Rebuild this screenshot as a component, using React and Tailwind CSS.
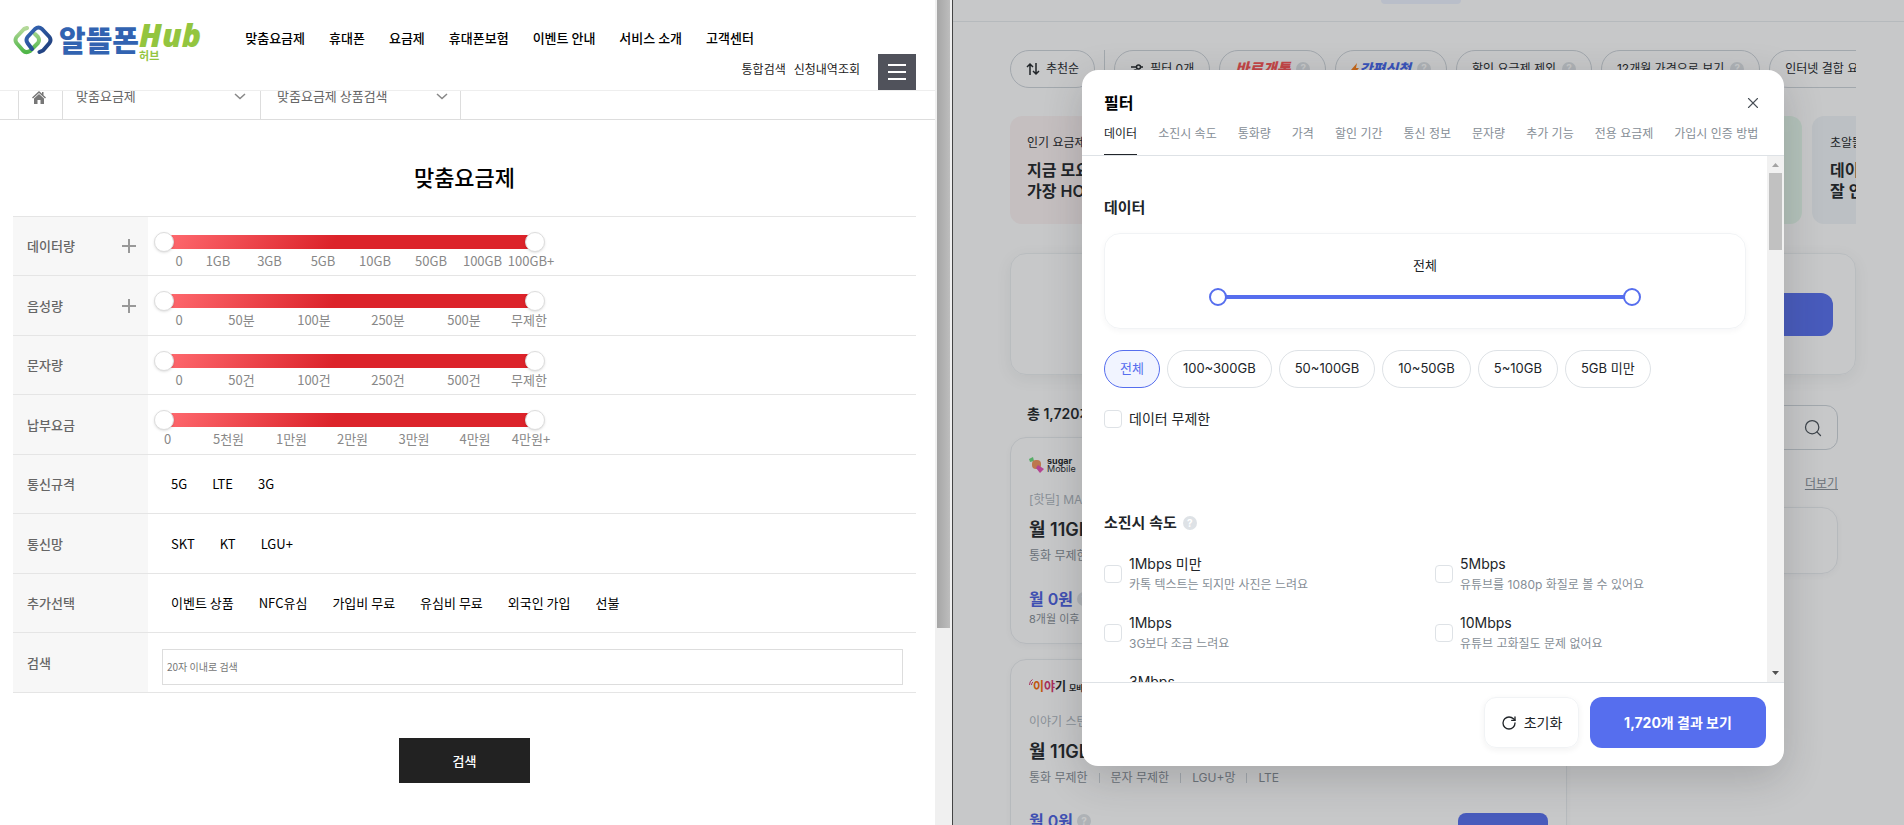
import React, { useState } from 'react';
import { Search, RotateCw, X } from 'lucide-react';

const menus = ['맞춤요금제', '휴대폰', '요금제', '휴대폰보험', '이벤트 안내', '서비스 소개', '고객센터'];

const countTicks = 'grid-cols-[36px_89px_56px_92px_60px_70px] pl-[13px]';

const sliders = [
  {
    id: 'data',
    label: '데이터량',
    expandable: true,
    ticks: ['0', '1GB', '3GB', '5GB', '10GB', '50GB', '100GB', '100GB+'],
    cols: 'grid-cols-[36px_42px_61px_46px_58px_54px_49px_48px] pl-[13px]'
  },
  {
    id: 'voice',
    label: '음성량',
    expandable: true,
    ticks: ['0', '50분', '100분', '250분', '500분', '무제한'],
    cols: countTicks
  },
  {
    id: 'sms',
    label: '문자량',
    ticks: ['0', '50건', '100건', '250건', '500건', '무제한'],
    cols: countTicks
  },
  {
    id: 'fee',
    label: '납부요금',
    ticks: ['0', '5천원', '1만원', '2만원', '3만원', '4만원', '4만원+'],
    cols: 'grid-cols-[39px_83px_43px_79px_44px_78px_34px]'
  }
];

const optionRows = [
  { label: '통신규격', options: ['5G', 'LTE', '3G'] },
  { label: '통신망', options: ['SKT', 'KT', 'LGU+'] },
  { label: '추가선택', options: ['이벤트 상품', 'NFC유심', '가입비 무료', '유심비 무료', '외국인 가입', '선불'] }
];

const filterTabs = ['데이터', '소진시 속도', '통화량', '가격', '할인 기간', '통신 정보', '문자량', '추가 기능', '전용 요금제', '가입시 인증 방법'];

const dataRanges = ['전체', '100~300GB', '50~100GB', '10~50GB', '5~10GB', '5GB 미만'];

const speeds = [
  { name: '1Mbps 미만', desc: '카톡 텍스트는 되지만 사진은 느려요' },
  { name: '5Mbps', desc: '유튜브를 1080p 화질로 볼 수 있어요' },
  { name: '1Mbps', desc: '3G보다 조금 느려요' },
  { name: '10Mbps', desc: '유튜브 고화질도 문제 없어요' }
];

const rowClass = 'border-b border-[#e5e5e5] odd:h-[59px] even:h-[60px]';
const thClass = 'w-[135px] bg-[#f7f7f7] pl-3.5 pr-3 text-left font-medium text-[#666]';

// 두 개의 range input을 겹친 양방향 슬라이더
const DualRange = ({ label, inputClass, children }) => {
  const [min, setMin] = useState(0);
  const [max, setMax] = useState(100);

  return (
    <>
      {children}
      <input
        type="range"
        aria-label={`${label} 최소`}
        value={min}
        onChange={(e) => setMin(Math.min(Number(e.target.value), max))}
        className={inputClass}
      />
      <input
        type="range"
        aria-label={`${label} 최대`}
        value={max}
        onChange={(e) => setMax(Math.max(Number(e.target.value), min))}
        className={inputClass}
      />
    </>
  );
};

const redThumbs =
  'pointer-events-none absolute inset-0 w-full appearance-none bg-transparent [&::-webkit-slider-thumb]:pointer-events-auto [&::-webkit-slider-thumb]:size-5 [&::-webkit-slider-thumb]:appearance-none [&::-webkit-slider-thumb]:rounded-full [&::-webkit-slider-thumb]:border [&::-webkit-slider-thumb]:border-[#ddd] [&::-webkit-slider-thumb]:bg-white [&::-webkit-slider-thumb]:shadow-sm';

const blueThumbs =
  'pointer-events-none absolute inset-0 w-full appearance-none bg-transparent [&::-webkit-slider-thumb]:pointer-events-auto [&::-webkit-slider-thumb]:size-[18px] [&::-webkit-slider-thumb]:appearance-none [&::-webkit-slider-thumb]:rounded-full [&::-webkit-slider-thumb]:border-2 [&::-webkit-slider-thumb]:border-[#566eee] [&::-webkit-slider-thumb]:bg-white';

const HubLogo = () => (
  <a href="#" className="flex items-start" aria-label="알뜰폰 허브">
    <svg viewBox="0 0 40 30" className="mt-1 h-[30px] w-10" fill="none" strokeWidth="4" strokeLinecap="round" strokeLinejoin="round">
      <defs>
        <linearGradient id="hubGreen" x1="0" y1="0" x2="0" y2="1">
          <stop offset="0" stopColor="#b5d99a" />
          <stop offset="1" stopColor="#4fb648" />
        </linearGradient>
        <linearGradient id="hubBlue" x1="0" y1="0" x2="1" y2="1">
          <stop offset="0" stopColor="#3568b8" />
          <stop offset="1" stopColor="#1f3c78" />
        </linearGradient>
      </defs>
      <path d="M14 3 11 4 3.500 12Q1.500 15 3.500 18L10 25.500Q13 28.500 17 26L25 18Q27 15 25 12L22 9" stroke="url(#hubGreen)" />
      <path d="M19 24 14.500 18Q12.500 15 14.500 12L22 4Q25.500 1 29 4L36.500 12Q38.500 15 36.500 18L30 25.500 26.500 27" stroke="url(#hubBlue)" />
    </svg>
    <span className="ml-1.5 text-[29px] leading-9 font-black text-[#3263b1]">알뜰폰</span>
    <span className="flex flex-col text-[#93c53f]">
      <span className="font-['Open_Sans','Noto_Sans',sans-serif] text-[32px] leading-7 font-extrabold italic">Hub</span>
      <span className="text-[11px] leading-3 font-bold">허브</span>
    </span>
  </a>
);

const HomeIcon = () => (
  <svg viewBox="0 0 14 13" className="h-[13px] w-3.5" fill="#777">
    <path d="M7 0 0 6.500l1 1L7 2l6 5.500 1-1-2.500-2.300V1H10v1.800z" />
    <path d="M7 3 2 7.600V13h3.500V9h3v4H12V7.600z" />
  </svg>
);

const Caret = () => (
  <svg viewBox="0 0 12 7" className="h-[7px] w-3" fill="none" stroke="#888" strokeWidth="1.500">
    <path d="M1 1l5 4.500L11 1" />
  </svg>
);

const HelpIcon = () => (
  <span className="flex size-3.5 items-center justify-center rounded-full bg-[#dee2e6] text-[10px] font-bold text-white">?</span>
);

const SearchPane = () => (
  <div className="flex w-1/2 shrink-0 bg-white font-['Noto_Sans_CJK_KR',sans-serif] text-[13px] text-black">
    <div className="min-w-0 flex-1">
      <header className="relative z-10 flex h-[91px] justify-between border-b border-[#eee] bg-white pr-[19px] pl-[13px]">
        <div className="flex items-start pt-[21px]">
          <HubLogo />
          <nav className="ml-11 flex gap-6 pt-[7px] leading-5 font-medium whitespace-nowrap">
            {menus.map(menu => (
              <a key={menu} href="#">{menu}</a>
            ))}
          </nav>
        </div>
        <div className="-ml-10 flex items-end">
          <div className="mr-[18px] flex gap-2 pb-[11px] text-xs leading-5 whitespace-nowrap text-[#222]">
            <a href="#">통합검색</a>
            <a href="#">신청내역조회</a>
          </div>
          <button type="button" aria-label="전체 메뉴" className="flex h-9 w-[38px] flex-col items-center justify-center gap-[5px] bg-[#50525b]">
            <span className="h-0.5 w-[18px] bg-white"></span>
            <span className="h-0.5 w-[18px] bg-white"></span>
            <span className="h-0.5 w-[18px] bg-white"></span>
          </button>
        </div>
      </header>

      {/* 현재 위치 */}
      <div className="-mt-4 flex h-[45px] border-b border-[#ddd] pl-[18px] text-[#666]">
        <a href="#" aria-label="홈" className="flex w-[45px] items-center justify-center border-x border-[#ddd] pr-1">
          <HomeIcon />
        </a>
        <button type="button" className="flex w-[198px] items-center justify-between border-r border-[#ddd] pr-3.5 pl-[13px] pb-0.5">
          맞춤요금제 <Caret />
        </button>
        <button type="button" className="flex w-[200px] items-center justify-between border-r border-[#ddd] pr-3 pl-4 pb-0.5">
          맞춤요금제 상품검색 <Caret />
        </button>
      </div>

      <main className="pr-[19px] pl-[13px]">
        <h1 className="pt-[39px] pb-[23px] text-center text-[22px] leading-[34px] font-medium">맞춤요금제</h1>
        <table className="w-full border-t border-[#e5e5e5]">
          <tbody>
            {sliders.map(row => (
              <tr key={row.id} className={rowClass}>
                <th scope="row" className={thClass}>
                  <span className="flex items-center justify-between">
                    {row.label}
                    {row.expandable && (
                      <button type="button" aria-label={`${row.label} 펼치기`} className="text-[#999]">
                        <svg viewBox="0 0 14 14" className="size-3.5" fill="none" stroke="currentColor" strokeWidth="2">
                          <path d="M7 0v14M0 7h14" />
                        </svg>
                      </button>
                    )}
                  </span>
                </th>
                <td className="pt-[9px]">
                  <div className="relative ml-1.5 h-5 w-[391px]">
                    <DualRange label={row.label} inputClass={redThumbs}>
                      <div className="mx-2.5 h-[17px] pt-[3px]">
                        <div className="h-3.5 bg-linear-[120deg,#ff6b70,#dc232a_46%]"></div>
                      </div>
                    </DualRange>
                  </div>
                  <div className={`grid justify-items-center leading-[18px] whitespace-nowrap text-[#888] ${row.cols}`}>
                    {row.ticks.map(tick => (
                      <span key={tick}>{tick}</span>
                    ))}
                  </div>
                </td>
              </tr>
            ))}
            {optionRows.map(row => (
              <tr key={row.label} className={rowClass}>
                <th scope="row" className={thClass}>{row.label}</th>
                <td>
                  <div className="flex gap-[25px] pl-[23px]">
                    {row.options.map(option => (
                      <label key={option} className="relative cursor-pointer">
                        <input type="checkbox" className="sr-only" />
                        {option}
                      </label>
                    ))}
                  </div>
                </td>
              </tr>
            ))}
            <tr className={rowClass}>
              <th scope="row" className={thClass}>
                <label htmlFor="keyword">검색</label>
              </th>
              <td className="pt-2 pr-[13px] pl-3.5">
                <input
                  id="keyword"
                  type="text"
                  placeholder="20자 이내로 검색"
                  className="block h-9 w-full border border-[#ddd] px-1 text-[10px] placeholder:text-[#777]"
                />
              </td>
            </tr>
          </tbody>
        </table>
        <button type="button" className="mx-auto mt-[45px] block h-[45px] w-[131px] bg-[#222] font-medium text-white">
          검색
        </button>
      </main>
    </div>
    {/* 스크롤바 */}
    <div className="w-[17px] bg-[#f0f0f0] px-0.5">
      <div className="h-[628px] bg-linear-to-r from-[#a6a6a6] to-[#bdbdbd]"></div>
    </div>
  </div>
);

const chipClass = 'flex h-[38px] shrink-0 items-center gap-1.5 rounded-full border border-[#ced4da] px-[15px] whitespace-nowrap';

const PlanCard = ({ logo, name, title, specs, after }) => (
  <div className="flex h-[207px] shrink-0 flex-col rounded-2xl border border-[#e9ecef] px-[18px] text-xs whitespace-nowrap shadow-[0_2px_6px_rgba(33,37,41,0.04)]">
    <div className="flex h-[54px] items-center">{logo}</div>
    <p className="leading-4 text-[#adb5bd]">{name}</p>
    <p className="mt-2.5 text-lg leading-6 font-semibold">{title}</p>
    <p className="mt-1 flex items-center gap-[11px] leading-5 text-[#868e96]">
      {specs.map((spec, i) => (
        <React.Fragment key={spec}>
          {i > 0 && <span className="h-2.5 w-px bg-[#ced4da]"></span>}
          {spec}
        </React.Fragment>
      ))}
    </p>
    <div className="mt-[23px] flex items-start justify-between">
      <div>
        <p className="flex items-center gap-1 text-base leading-5 font-semibold text-[#4a5ee0]">
          월 0원 <HelpIcon />
        </p>
        <p className="text-[11px] leading-5 text-[#868e96]">{after}</p>
      </div>
      <button type="button" className="mt-0.5 h-[38px] w-[90px] rounded-lg bg-[#566eee] font-semibold text-white">자세히 보기</button>
    </div>
  </div>
);

const PlanList = () => (
  <div className="pr-12 pl-[57px] text-xs">
    <div className="-mr-12 -ml-[57px] flex h-[22px] items-start justify-center border-b border-[#e9ecef] pr-4">
      <span className="h-1 w-20 rounded-b-lg bg-[#edf2ff]"></span>
    </div>
    <div className="mt-7 flex gap-[9px] overflow-hidden">
      <button type="button" className={chipClass}>
        <svg viewBox="0 0 14 14" className="size-3.5" fill="none" stroke="currentColor" strokeWidth="1.500">
          <path d="M4 13V2M1 5l3-3 3 3M10 1v11M7 9l3 3 3-3" />
        </svg>
        추천순
      </button>
      <span className="w-px shrink-0 bg-[#ced4da]"></span>
      <button type="button" className={chipClass}>
        <svg viewBox="0 0 14 14" className="size-3.5" fill="none" stroke="currentColor" strokeWidth="1.500">
          <path d="M1 5h5M11 5h2M1 10h2M8 10h5" />
          <circle cx="8.500" cy="5" r="2" />
          <circle cx="5.500" cy="10" r="2" />
        </svg>
        필터 0개
      </button>
      <button type="button" className={chipClass}>
        <span className="text-[15px] font-black text-[#fa5252] italic">바로개통</span><HelpIcon />
      </button>
      <button type="button" className={chipClass}>
        <span className="flex items-center text-sm font-black text-[#4263eb] italic">
          <svg viewBox="0 0 8 12" className="h-3 w-2" fill="#fd7e14"><path d="M6 0 0 7h3l-1 5 6-7H5z" /></svg>
          간편신청
        </span>
        <HelpIcon />
      </button>
      <button type="button" className={chipClass}>할인 요금제 제외<HelpIcon /></button>
      <button type="button" className={chipClass}>12개월 가격으로 보기<HelpIcon /></button>
      <button type="button" className={chipClass}>인터넷 결합 요금제</button>
    </div>

    {/* 추천 배너 */}
    <div className="mt-7 flex gap-2.5 overflow-hidden whitespace-nowrap">
      <a href="#" className="h-[108px] w-[258px] shrink-0 rounded-xl bg-[#fcf3f3] px-[17px] pt-[17px]">
        <p className="leading-5">인기 요금제</p>
        <p className="mt-[7px] text-base leading-[21px] font-semibold">지금 모요에서<br />가장 HOT한</p>
      </a>
      <a href="#" className="h-[108px] w-[258px] shrink-0 rounded-xl bg-[#edf2ff]" aria-label="이벤트"></a>
      <a href="#" className="h-[108px] w-64 shrink-0 rounded-xl bg-[#e6f9ec]" aria-label="통신사"></a>
      <a href="#" className="h-[108px] w-[258px] shrink-0 rounded-xl bg-[#f1f5f8] px-[18px] pt-[17px]">
        <p className="leading-5">초알뜰 요금제</p>
        <p className="mt-[7px] text-base leading-[21px] font-semibold">데이터<br />잘 안 쓴다면</p>
      </a>
    </div>

    <div className="mt-[29px] flex h-[122px] items-center justify-end rounded-2xl border border-[#edf0f2] px-[22px] shadow-[0_4px_16px_rgba(33,37,41,0.07)]">
      <button type="button" aria-label="요금제 찾기" className="h-[43px] w-[200px] rounded-xl bg-[#566eee]"></button>
    </div>

    <div className="mt-7 flex justify-between pr-[18px]">
      <div className="flex w-[557px] flex-col gap-[15px]">
        <p className="-mb-[15px] h-[34px] pl-[17px] text-sm leading-[22px] font-semibold">총 1,720개</p>
        <PlanCard
          logo={
            <>
              <svg viewBox="0 0 16 16" className="size-4">
                <path d="M0 2 4 0 5 4 1 5z" fill="#69db7c" />
                <rect x="3" y="3" width="9" height="9" rx="4" fill="#f0945a" />
                <path d="M9 8l6 4-4 4-4-5z" fill="#e64fb5" />
              </svg>
              <span className="ml-0.5 text-[9px] leading-2"><b>sugar</b><br />Mobile</span>
            </>
          }
          name="[핫딜] MAX 데이터"
          title="월 11GB + 매일 2GB"
          specs={['통화 무제한', '문자 무제한']}
          after="8개월 이후 33,000원"
        />
        <PlanCard
          logo={
            <>
              <svg viewBox="0 0 4 8" className="mb-2 h-2 w-1" fill="none" stroke="#d6336c">
                <path d="M.5 6Q.5 2 3.500.500M2.500 6Q2.500 4 4 3" />
              </svg>
              <span className="text-xs font-bold">
                <span className="text-[#f76707]">이</span><span className="text-[#d6336c]">야</span>기 <span className="text-[8px]">모바일</span>
              </span>
            </>
          }
          name="이야기 스탠다드"
          title="월 11GB + 매일 2GB"
          specs={['통화 무제한', '문자 무제한', 'LGU+망', 'LTE']}
          after="7개월 이후 33,000원"
        />
      </div>
      <aside className="w-[250px]">
        <div className="mt-0.5 flex h-[45px] items-center rounded-xl border border-[#ced4da] pr-3.5">
          <input type="text" aria-label="요금제 검색" className="min-w-0 flex-1" />
          <Search className="size-5 stroke-[1.5] text-[#495057]" />
        </div>
        <p className="mt-6 text-right leading-5 text-[#868e96]"><a href="#" className="underline">더보기</a></p>
        <div className="mt-[13px] h-[67px] rounded-2xl border border-[#e9ecef] shadow-[0_2px_6px_rgba(33,37,41,0.04)]"></div>
      </aside>
    </div>
  </div>
);

const checkboxClass = 'size-[18px] shrink-0 appearance-none rounded border border-[#dee2e6] bg-white checked:bg-[#566eee]';

const FilterModal = () => {
  const [tab, setTab] = useState('데이터');
  const [range, setRange] = useState('전체');

  return (
    <div role="dialog" aria-label="필터" className="flex h-[696px] w-[702px] flex-col overflow-hidden rounded-2xl bg-white shadow-[0_12px_40px_rgba(33,37,41,0.2)]">
      <div className="border-b border-[#dee2e6] px-[22px] pt-[21px]">
        <div className="flex items-center justify-between">
          <h2 className="text-base leading-6 font-bold text-black">필터</h2>
          <button type="button" aria-label="닫기"><X className="size-[18px] stroke-[1.5] text-[#495057]" /></button>
        </div>
        <div className="mt-[7px] flex gap-[21px] text-xs whitespace-nowrap">
          {filterTabs.map(name => (
            <button
              key={name}
              type="button"
              onClick={() => setTab(name)}
              className={`h-[33px] border-b pb-[9px] ${tab === name ? 'border-[#212529] text-[#212529]' : 'border-transparent text-[#868e96]'}`}
            >
              {name}
            </button>
          ))}
        </div>
      </div>

      <div className="flex min-h-0 flex-1">
        <div className="flex-1 overflow-hidden pt-10 pr-[21px] pl-[22px]">
          <h3 className="text-[15px] leading-6 font-semibold">데이터</h3>
          <div className="mt-[13px] flex h-[96px] flex-col items-center rounded-2xl border border-[#f1f3f5] pt-[21px] shadow-[0_2px_6px_rgba(33,37,41,0.04)]">
            <p className="text-[13px] leading-5">전체</p>
            <div className="relative mt-[13px] h-[18px] w-[432px]">
              <DualRange label="데이터" inputClass={blueThumbs}>
                <div className="mx-2 h-full py-[7px]">
                  <div className="h-1 bg-[#566eee]"></div>
                </div>
              </DualRange>
            </div>
          </div>
          <div className="mt-[21px] flex gap-[7px] text-[13px]">
            {dataRanges.map(name => (
              <button
                key={name}
                type="button"
                onClick={() => setRange(name)}
                className={`h-[38px] rounded-full border px-[15px] ${range === name ? 'border-[#566eee] bg-[#f1f4ff] text-[#566eee]' : 'border-[#dee2e6]'}`}
              >
                {name}
              </button>
            ))}
          </div>
          <label className="mt-[19px] flex items-center gap-[7px] text-sm leading-6">
            <input type="checkbox" className={checkboxClass} />
            데이터 무제한
          </label>

          <h3 className="mt-20 flex items-center gap-1.5 text-[15px] leading-6 font-semibold">소진시 속도 <HelpIcon /></h3>
          <div className="mt-[18px] grid grid-cols-2 gap-x-5 gap-y-[17px]">
            {speeds.map(speed => (
              <label key={speed.name} className="flex items-center gap-[7px]">
                <input type="checkbox" className={checkboxClass} />
                <span>
                  <span className="block text-sm leading-[22px]">{speed.name}</span>
                  <span className="block text-xs leading-5 text-[#868e96]">{speed.desc}</span>
                </span>
              </label>
            ))}
            <label className="flex items-center gap-[7px]">
              <input type="checkbox" className={checkboxClass} />
              <span className="h-[42px] text-sm leading-[22px]">3Mbps</span>
            </label>
          </div>
        </div>
        <div className="flex w-[17px] flex-col items-center justify-between bg-[#f1f1f1]">
          <div className="flex flex-col items-center">
            <svg viewBox="0 0 17 17" className="size-[17px]"><path d="M5 11h7L8.500 7z" fill="#a3a3a3" /></svg>
            <div className="h-[77px] w-[13px] bg-[#c1c1c1]"></div>
          </div>
          <svg viewBox="0 0 17 17" className="size-[17px]"><path d="M5 6h7L8.500 10z" fill="#505050" /></svg>
        </div>
      </div>

      <div className="flex h-[84px] shrink-0 justify-end gap-[11px] border-t border-[#dee2e6] pt-3.5 pr-[18px] text-sm">
        <button type="button" className="flex h-[51px] w-[95px] items-center justify-center gap-[7px] rounded-xl border border-[#f1f3f5] shadow-[0_2px_6px_rgba(33,37,41,0.06)]">
          <RotateCw className="size-4" />초기화
        </button>
        <button type="button" className="h-[51px] w-[176px] rounded-xl bg-[#566eee] font-bold text-white">1,720개 결과 보기</button>
      </div>
    </div>
  );
};

const App = () => {
  return (
    <div className="flex h-screen overflow-hidden">
      <SearchPane />
      <div className="relative min-w-0 flex-1 overflow-hidden border-l border-[#444] bg-white font-['Inter','Noto_Sans_CJK_KR',sans-serif] text-[#212529]">
        <PlanList />
        <div className="absolute inset-0 flex items-start justify-center bg-[#212529]/25 pt-[70px] pr-12 pl-[57px]">
          <FilterModal />
        </div>
      </div>
    </div>
  );
};

export default App;
